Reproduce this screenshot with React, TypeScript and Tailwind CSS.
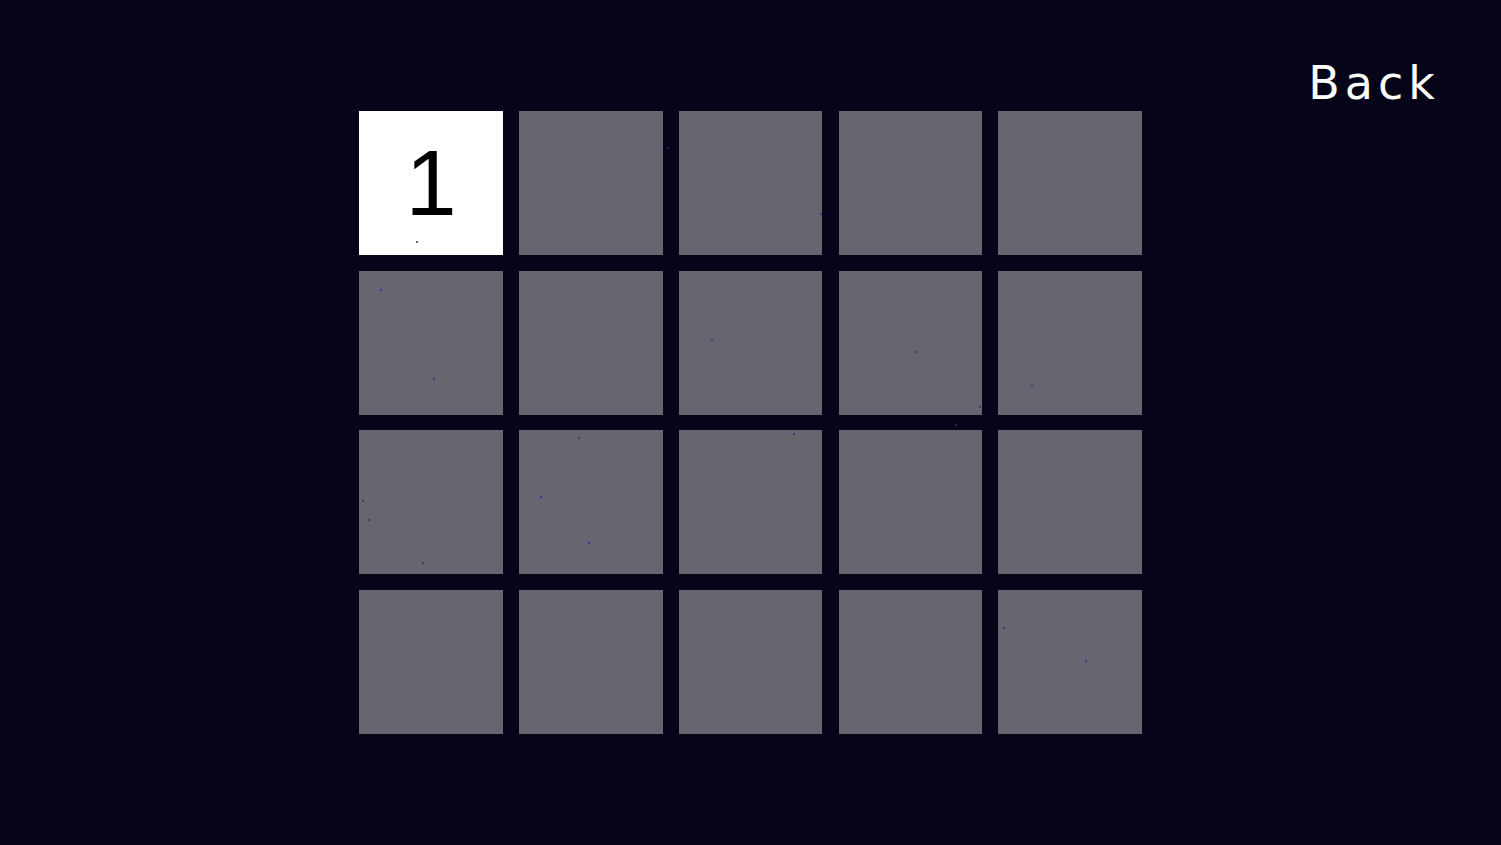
import React from 'react';

const specks: [number, number][] = [
  [416, 241], [380, 289], [433, 378], [711, 339], [915, 351], [1031, 385],
  [979, 406], [955, 424], [793, 433], [578, 437], [540, 496], [588, 542],
  [362, 500], [368, 519], [422, 562], [1003, 627], [1085, 660], [667, 147], [820, 213],
];

export default function App() {
  const tiles = Array.from({ length: 20 }, (_, i) => i);

  return (
    <div className="relative w-full h-[845px] bg-[#050419] overflow-hidden flex items-center justify-center">
      {/* Back link */}
      <button className="absolute top-[60px] right-[61px] text-white text-[46px] leading-none tracking-[5px] font-['DejaVu_Sans',sans-serif] font-normal">
        Back
      </button>

      {/* Level grid */}
      <div className="grid grid-cols-5 gap-x-[16.25px] gap-y-[15.75px]">
        {tiles.map((i) =>
          i === 0 ? (
            <div
              key={i}
              className="w-[143.5px] h-[144px] bg-white flex items-center justify-center text-black text-[92px] leading-none font-['Liberation_Sans',sans-serif] font-light"
            >
              1
            </div>
          ) : (
            <div key={i} className="w-[143.5px] h-[144px] bg-[#67656f]" />
          )
        )}
      </div>

      {/* Dust particles */}
      {specks.map(([x, y], i) => (
        <span
          key={i}
          className="absolute w-[2px] h-[2px] rounded-full bg-[#2b2a8c]"
          style={{ left: x, top: y }}
        />
      ))}
    </div>
  );
}
